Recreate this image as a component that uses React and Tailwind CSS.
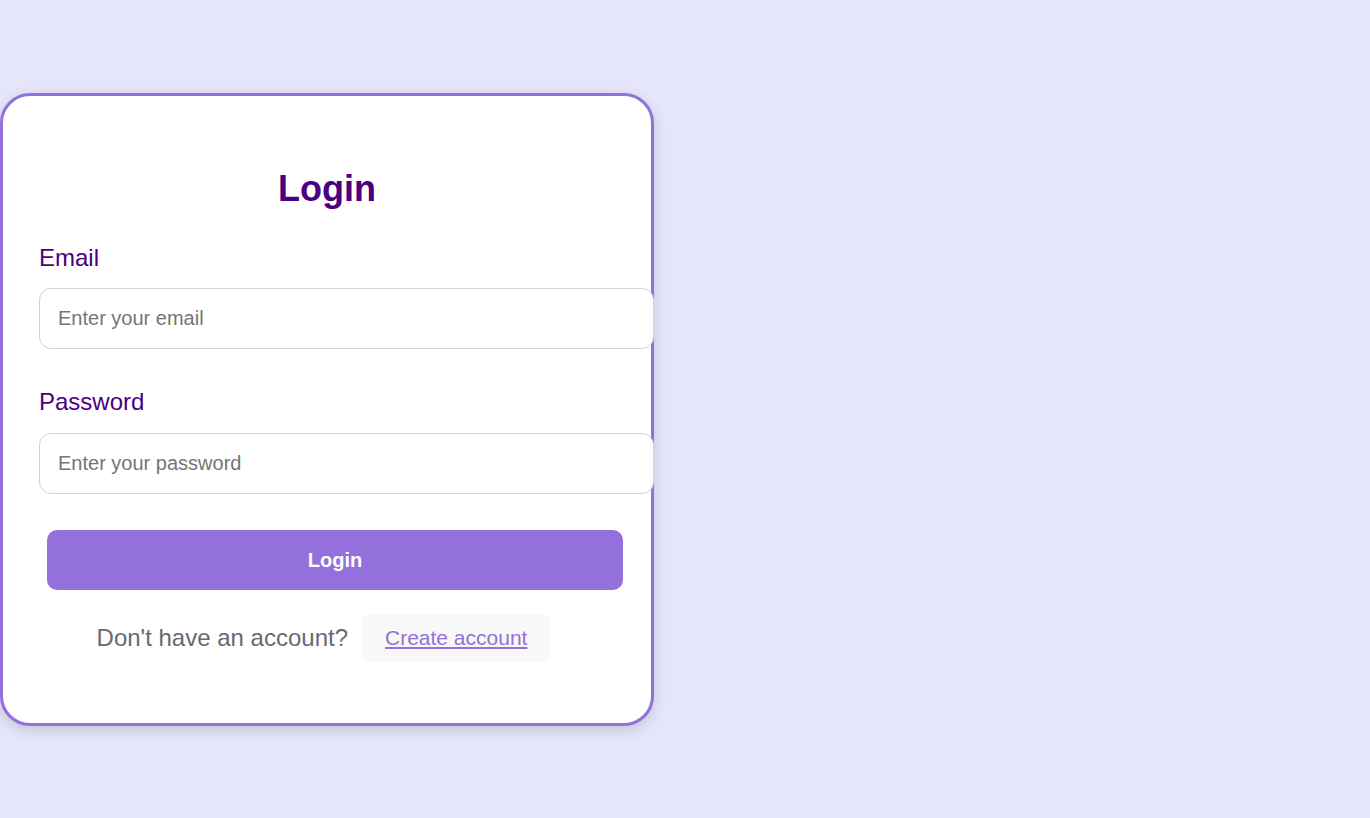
export default function App() {
  return (
    <div className="min-h-[818px] w-full bg-[#E6E6FA] pt-[93px]" style={{ fontFamily: '"Liberation Sans", Arial, sans-serif' }}>
      <div className="w-[654px] rounded-[30px] border-[3px] border-[#9370DB] bg-white shadow-[0_4px_14px_rgba(0,0,0,0.15)] pt-[73px] pb-[61px] pl-[36px] flex flex-col">
        <h2 className="text-[36px] leading-[40px] font-bold text-[#4B0082] text-center pr-[36px]">Login</h2>
        <label className="mt-[35px] text-[24px] leading-[28px] text-[#4B0082]">Email</label>
        <input
          type="email"
          placeholder="Enter your email"
          className="mt-[16px] w-[615px] h-[61px] rounded-[12px] border border-[#d1d1d9] px-[18px] text-[20px] bg-white placeholder:text-[#757575] outline-none"
        />
        <label className="mt-[39px] text-[24px] leading-[28px] text-[#4B0082]">Password</label>
        <input
          type="password"
          placeholder="Enter your password"
          className="mt-[17px] w-[615px] h-[61px] rounded-[12px] border border-[#d1d1d9] px-[18px] text-[20px] bg-white placeholder:text-[#757575] outline-none"
        />
        <button className="mt-[36px] ml-[8px] w-[576px] h-[60px] rounded-[10px] bg-[#9370DB] text-white font-bold text-[20px]">
          Login
        </button>
        <div className="mt-[24px] pr-[43px] flex items-center justify-center gap-[14px]">
          <span className="text-[24px] text-[#666a72]">Don't have an account?</span>
          <button className="h-[48px] px-[23px] rounded-[6px] bg-[#f8f8f8] text-[21px] text-[#9370DB] underline">
            Create account
          </button>
        </div>
      </div>
    </div>
  );
}
